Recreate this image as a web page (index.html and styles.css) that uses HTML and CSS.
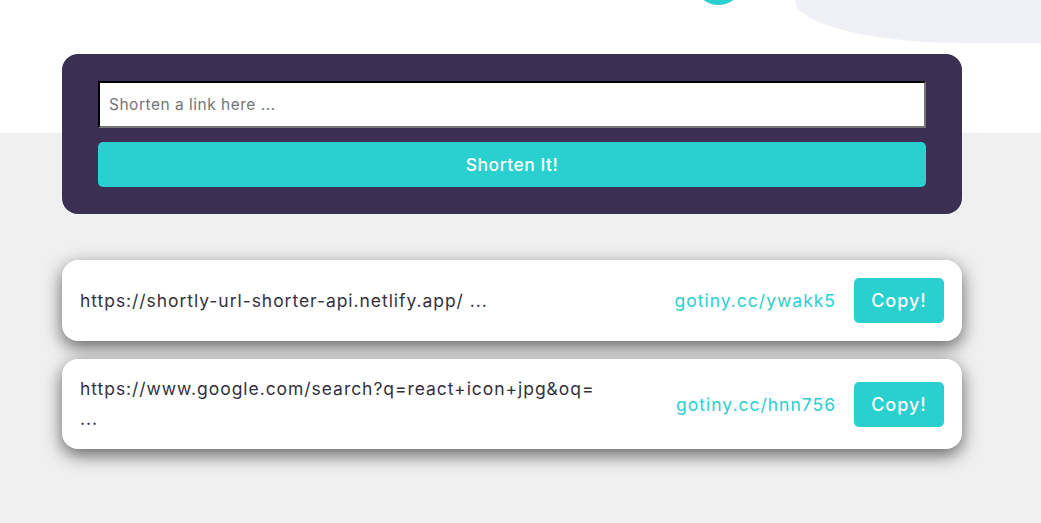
FILE: index.html
```html
<!DOCTYPE html>
<html>
<head>
<meta charset="utf-8">
<link rel="stylesheet" href="styles.css">
</head>
<body>
<div class="decor">
  <div class="teal-dot"></div>
  <div class="blob"></div>
</div>
<main class="wrap">
  <form class="shorten">
    <input class="link-input" type="text" placeholder="Shorten a link here ...">
    <button class="shorten-btn" type="button">Shorten It!</button>
  </form>
  <ul class="results">
    <li class="result">
      <span class="orig">https://shortly-url-shorter-api.netlify.app/ ...</span>
      <span class="short">gotiny.cc/ywakk5</span>
      <button class="copy" type="button">Copy!</button>
    </li>
    <li class="result tall">
      <span class="orig">https://www.google.com/search?q=react+icon+jpg&amp;oq=<br>...</span>
      <span class="short">gotiny.cc/hnn756</span>
      <button class="copy" type="button">Copy!</button>
    </li>
  </ul>
</main>
</body>
</html>
```
FILE: styles.css
```css
* { box-sizing: border-box; }
html, body { margin: 0; padding: 0; }
body {
  width: 1041px;
  height: 523px;
  overflow: hidden;
  position: relative;
  font-family: "Inter", "Open Sans", sans-serif;
  background: linear-gradient(#ffffff 0, #ffffff 133px, #f0f0f0 133px, #f0f0f0 100%);
}
.decor { position: absolute; inset: 0; overflow: hidden; pointer-events: none; }
.teal-dot {
  position: absolute;
  left: 700px;
  top: -20px;
  width: 37px;
  height: 25px;
  border-radius: 50%;
  background: #2acfcf;
}
.blob {
  position: absolute;
  left: 795px;
  top: 0;
  width: 246px;
  height: 43px;
  border-radius: 0 0 0 170px / 0 0 0 43px;
  background: #eff0f6;
}
.wrap {
  position: relative;
  width: 900px;
  margin-left: 62px;
  padding-top: 54px;
}
.shorten {
  margin: 0;
  background: #3b3054;
  border-radius: 16px;
  padding: 27px 36px;
  display: flex;
  flex-direction: column;
  gap: 14px;
}
.link-input {
  height: 47px;
  width: 100%;
  border: 2px inset #767676;
  border-top-color: #222;
  border-left-color: #222;
  background: #fff;
  padding: 0 9px;
  font-family: inherit;
  font-size: 15.5px;
  letter-spacing: 0.5px;
  color: #333;
}
.link-input::placeholder { color: #757575; }
.shorten-btn {
  height: 45px;
  border: none;
  border-radius: 5px;
  background: #2acfcf;
  color: #fff;
  font-family: inherit;
  font-size: 17.5px;
  letter-spacing: 0.5px;
  font-weight: 500;
}
.results {
  list-style: none;
  margin: 46px 0 0;
  padding: 0;
  display: flex;
  flex-direction: column;
  gap: 18px;
}
.result {
  height: 81px;
  background: #fff;
  border-radius: 16px;
  box-shadow: 0 6px 18px rgba(0, 0, 0, 0.6);
  padding: 0 18px;
  display: flex;
  align-items: center;
}
.result.tall { height: 90px; }
.orig {
  flex: 1;
  font-size: 17.5px;
  letter-spacing: 0.95px;
  color: #34313d;
  line-height: 30px;
}
.short {
  font-size: 17.5px;
  letter-spacing: 1px;
  color: #2acfcf;
  margin-right: 18px;
}
.copy {
  width: 90px;
  height: 45px;
  border: none;
  border-radius: 5px;
  background: #2acfcf;
  color: #fff;
  font-family: inherit;
  font-size: 18px;
  letter-spacing: 1px;
  font-weight: 500;
}
```
